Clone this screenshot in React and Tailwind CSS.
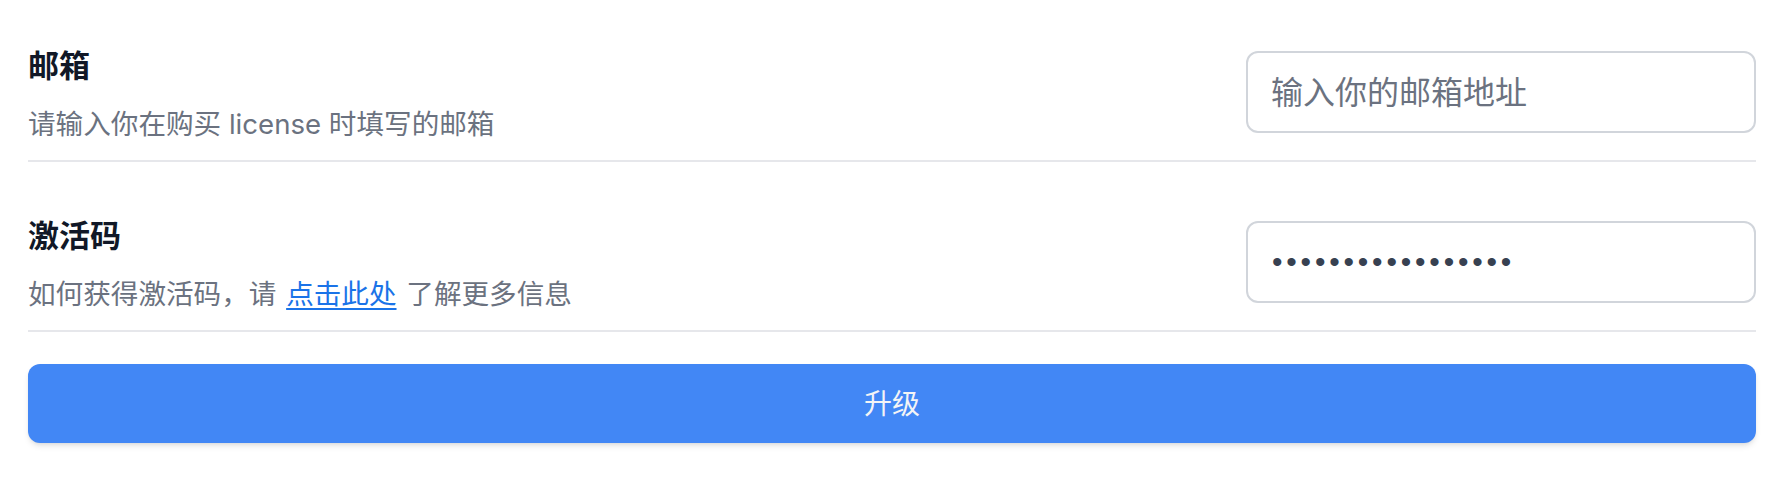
import React from "react";

const font = "font-['Inter','Noto_Sans_CJK_SC',sans-serif]";

const Row = ({ title, children, input, first }) => (
  <div className={`flex items-start justify-between border-b-2 border-[#e6e7eb] pb-4 ${first ? "" : "pt-[54px]"}`}>
    <div className="flex-1">
      <div className="text-[31px] leading-[40px] font-semibold text-[#111827]">{title}</div>
      <div className="mt-[18px] text-[27.6px] leading-[40px] text-[#6b7280]">{children}</div>
    </div>
    <div className="mt-[5px] w-[510px]">{input}</div>
  </div>
);

export default function App() {
  return (
    <div className={`min-h-screen bg-white px-[28px] pt-[46px] ${font}`}>
      {/* 邮箱 */}
      <Row
        first
        title="邮箱"
        input={
          <input
            type="email"
            placeholder="输入你的邮箱地址"
            className="h-[82px] w-full rounded-[12px] border-2 border-[#d1d5db] bg-white px-[23px] text-[32px] text-[#374151] outline-none placeholder:text-[#6b7280]"
          />
        }
      >
        请输入你在购买 license 时填写的邮箱
      </Row>

      {/* 激活码 */}
      <Row
        title="激活码"
        input={
          <input
            type="password"
            readOnly
            defaultValue="abcdefghijklmnopq"
            className="h-[82px] w-full rounded-[12px] border-2 border-[#d1d5db] bg-white px-[24px] font-['Liberation_Sans',sans-serif] text-[30px] tracking-[3.8px] text-[#374151] outline-none"
          />
        }
      >
        如何获得激活码，请{" "}
        <a href="#" className="mx-[2px] text-[#1a73e8] underline underline-offset-4">
          点击此处
        </a>{" "}
        了解更多信息
      </Row>

      <button className="mt-[32px] flex h-[79px] w-full items-center justify-center rounded-[12px] bg-[#4287f5] text-[28px] text-[#f3f4f6] shadow-md">
        升级
      </button>
    </div>
  );
}
